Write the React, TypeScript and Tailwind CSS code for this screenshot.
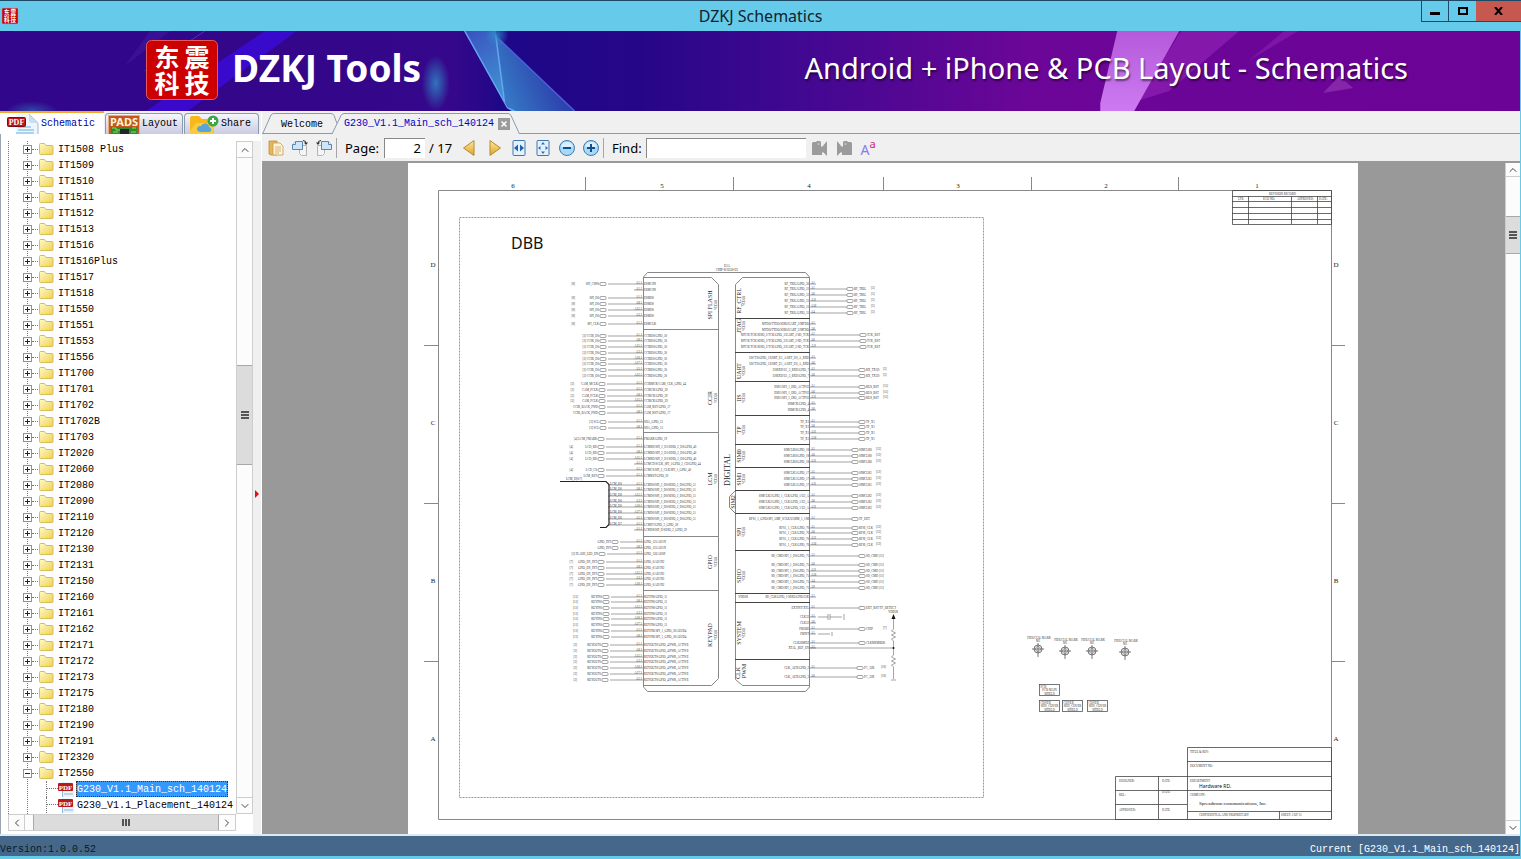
import { useState } from 'react';
import type { ReactNode } from 'react';
import { ChevronDown, ChevronLeft, ChevronRight, ChevronUp } from 'lucide-react';

const folders = [
  'IT1508 Plus', 'IT1509', 'IT1510', 'IT1511', 'IT1512', 'IT1513', 'IT1516', 'IT1516Plus',
  'IT1517', 'IT1518', 'IT1550', 'IT1551', 'IT1553', 'IT1556', 'IT1700', 'IT1701', 'IT1702',
  'IT1702B', 'IT1703', 'IT2020', 'IT2060', 'IT2080', 'IT2090', 'IT2110', 'IT2120', 'IT2130',
  'IT2131', 'IT2150', 'IT2160', 'IT2161', 'IT2162', 'IT2171', 'IT2172', 'IT2173', 'IT2175',
  'IT2180', 'IT2190', 'IT2191', 'IT2320', 'IT2550',
];

const files = ['G230_V1.1_Main_sch_140124', 'G230_V1.1_Placement_140124'];

/* ---------- icons ---------- */

function BrandLogo({ width, height }: { width: number; height: number }) {
  return (
    <svg width={width} height={height} viewBox="0 0 72 60" preserveAspectRatio="none" className="overflow-visible" aria-hidden="true">
      <rect x="0.5" y="0.5" width="71" height="59" rx="5" fill="#cc0000" stroke="#e8585a" />
      <g fill="#fff" fontFamily="Noto Sans CJK SC, sans-serif" fontWeight="700" fontSize="25" textAnchor="middle">
        <text x="21" y="27">东</text>
        <text x="51" y="27">震</text>
        <text x="21" y="53">科</text>
        <text x="51" y="53">技</text>
      </g>
    </svg>
  );
}

function FolderIcon() {
  return (
    <svg width="15" height="14" viewBox="0 0 15 14" aria-hidden="true">
      <defs>
        <linearGradient id="folder" x1="0" y1="0" x2="1" y2="1">
          <stop offset="0" stopColor="#fffbc0" />
          <stop offset="1" stopColor="#efcf5a" />
        </linearGradient>
      </defs>
      <path d="M.5 11.5v-9q0-1 1-1h4l1.5 2h6q1 0 1 1v7q0 1-1 1h-11.500q-1 0-1-1z" fill="url(#folder)" stroke="#d9bd55" />
    </svg>
  );
}

function PdfIcon() {
  return (
    <svg width="16" height="16" viewBox="0 0 16 16" aria-hidden="true">
      <path d="M4 1h8l4 4v11H4z" fill="#e9f2fa" />
      <path d="M4.500 10v6M6 13h9" stroke="#8fb8dc" />
      <rect x="0" y="2" width="15" height="8" rx="1" fill="#b8191b" />
      <text x="7.500" y="8.500" fontSize="7" fontWeight="700" fill="#fff" textAnchor="middle" fontFamily="Liberation Serif, serif">PDF</text>
    </svg>
  );
}

function PdfTabIcon() {
  return (
    <svg width="32" height="20" viewBox="0 0 32 20" aria-hidden="true">
      <path d="M9 0h13l9 8v12H9z" fill="#eef5fb" />
      <path d="M22 0l9 9v11" fill="none" stroke="#9db6cc" />
      <path d="M22 0v7q0 2 2 2h7z" fill="#c9def0" />
      <path d="M11 13h13M11 16h16M9 19h18" stroke="#a9d3ef" strokeWidth="2" />
      <rect x="0.500" y="3.500" width="18" height="9" rx="1" fill="#c01417" stroke="#7e0c0e" />
      <text x="9.500" y="11" fontSize="8" fontWeight="700" fill="#fff" textAnchor="middle" fontFamily="Liberation Serif, serif">PDF</text>
    </svg>
  );
}

function PadsIcon() {
  return (
    <svg width="32" height="19" viewBox="0 0 32 19" aria-hidden="true">
      <rect x="0.500" y="0.500" width="31" height="20" fill="#c4571c" stroke="#e3b07c" />
      <rect x="3" y="12" width="26" height="7" fill="#2f8a2c" />
      <path d="M4 13h4v2h4M24 13h4M5 17h5M23 17h5" stroke="#8be05a" fill="none" />
      <rect x="12" y="14" width="9" height="5" fill="#20262a" />
      <text x="16" y="11" fontSize="11" fontWeight="700" fill="#fff5d8" textAnchor="middle" fontFamily="Noto Sans, sans-serif">PADS</text>
    </svg>
  );
}

function ShareIcon() {
  return (
    <svg width="32" height="19" viewBox="0 0 32 19" aria-hidden="true">
      <path d="M3 3q0-2 2-2h7l3 3h10q2 0 2 2v12H5q-2 0-2-2z" fill="#f7b81c" />
      <path d="M3 16l6-8h19l-2 11H5q-2 0-2-3z" fill="#fbcb3c" />
      <path d="M14 17q-4 0-4-3t4-3q1-3 5-2.500q3 .5 3 3.500q3 1 2 4q-.5 1-2 1z" fill="#58a5dc" />
      <circle cx="26" cy="6" r="5.500" fill="#3fa648" />
      <path d="M26 3v6M23 6h6" stroke="#fff" strokeWidth="2" />
    </svg>
  );
}

function CopyPageIcon() {
  return (
    <svg width="16" height="18" viewBox="0 0 16 18" aria-hidden="true">
      <path d="M1 2h8v14H3l-2-1z" fill="#e7b65a" stroke="#c08a35" strokeWidth=".8" />
      <path d="M5 4h7l3 3v9H5z" fill="#fff3d6" stroke="#c79a50" strokeWidth=".8" />
      <path d="M7 8h6M7 10h6M7 12h6M7 14h4" stroke="#c9a468" strokeWidth=".8" />
    </svg>
  );
}

function RotateIcon({ left = false }: { left?: boolean }) {
  return (
    <svg width="18" height="18" viewBox="0 0 18 18" aria-hidden="true" className={left ? '-scale-x-100' : ''}>
      <path d="M9.500 6.500h6v10h-5l-2-2v-4z" fill="#f4f4f4" stroke="#b5b5b5" />
      <path d="M4.500 2.500h7v8h-10v-5z" fill="#cfe5f8" stroke="#5b86b4" />
      <path d="M1.500 5.500h3v-3" fill="#fff" stroke="#5b86b4" />
      <path d="M12 1.500q3 0 3 3" fill="none" stroke="#333" />
      <path d="M13 3.500h4l-2 2.500z" fill="#333" />
    </svg>
  );
}

function TurnIcon({ next = false }: { next?: boolean }) {
  return (
    <svg width="14" height="18" viewBox="0 0 14 18" aria-hidden="true" className={next ? '-scale-x-100' : ''}>
      <defs>
        <linearGradient id="gold" x1="0" y1="0" x2="0" y2="1">
          <stop offset="0" stopColor="#ffe9a0" />
          <stop offset="1" stopColor="#dba426" />
        </linearGradient>
      </defs>
      <path d="M12 1.500v15L1.500 9z" fill="url(#gold)" stroke="#b58a2c" strokeLinejoin="round" />
    </svg>
  );
}

function FitIcon({ whole = false }: { whole?: boolean }) {
  return (
    <svg width="16" height="18" viewBox="0 0 16 18" aria-hidden="true">
      <rect x="2" y="1.500" width="12" height="15" rx="1" fill="#e4f0fb" stroke="#3f77b0" />
      {whole ? (
        <path d="M8 3l2 2.500H6zM8 15l2-2.500H6zM3 9l2.500-2v4zM13 9l-2.500-2v4z" fill="#2f6fb2" />
      ) : (
        <path d="M3 9l4-3.500v7zM13 9L9 5.500v7z" fill="#1f63ad" />
      )}
    </svg>
  );
}

function ZoomIcon({ plus = false }: { plus?: boolean }) {
  return (
    <svg width="18" height="18" viewBox="0 0 18 18" aria-hidden="true">
      <circle cx="9" cy="9" r="7.500" fill="#a8d8f6" stroke="#3d7db4" />
      <path d="M3 8q1-5 6-5t6 5z" fill="#d8f0ff" />
      <path d={plus ? 'M5 9h8M9 5v8' : 'M5 9h8'} stroke="#0f4f8c" strokeWidth="2" />
    </svg>
  );
}

function FindStepIcon({ next = false }: { next?: boolean }) {
  return (
    <svg width="16" height="16" viewBox="0 0 16 16" aria-hidden="true" className={next ? '-scale-x-100' : ''}>
      <path d="M0 3l1-1h3l1-1h3l1 1v4l1 1 5-6v15l-4-4-1 1v2H0z" fill="#9b9b9b" />
      <circle cx="6.500" cy="4" r="1" fill="#c8c8c8" />
    </svg>
  );
}

/* ---------- schematic sheet ---------- */

interface PinGroup {
  ys: number[];
  gate?: number;
  net?: string;
  pin: string;
  ref?: string;
}

const leftPins: PinGroup[] = [
  { ys: [284], gate: 600, net: 'SPI_CSN0', pin: 'ESMCSN', ref: '[8]' },
  { ys: [290], pin: 'ESMCSN' },
  { ys: [298, 304, 310, 316], gate: 600, net: 'SPI_D0', pin: 'ESMD0', ref: '[8]' },
  { ys: [324], gate: 600, net: 'SPI_CLK', pin: 'ESMCLK', ref: '[8]' },
  { ys: [336, 341, 347, 353, 359, 364, 370, 376], gate: 600, net: '[3] CCIR_D0', pin: 'CCIRD0/GPIO_30' },
  { ys: [384], gate: 599, net: 'CAM_MCLK', pin: 'CCIRMCK/CAM_CLK_GPIO_44', ref: '[3]' },
  { ys: [390, 396, 401], gate: 599, net: 'CAM_PCLK', pin: 'CCIRCK/GPIO_39', ref: '[3]' },
  { ys: [407, 413], gate: 599, net: 'CCIR_BACK_PWD', pin: 'CAM_RST/GPIO_17' },
  { ys: [422, 428], gate: 600, net: '[3] SCL', pin: 'SDA_GPIO_15' },
  { ys: [439], gate: 598, net: '[4] LCM_FMARK', pin: 'FMARK/GPIO_19' },
  { ys: [447, 453, 459], gate: 598, net: 'LCD_RD', pin: 'LCMRD/SPI_2_D1/SDIO_2_D0/GPIO_40', ref: '[4]' },
  { ys: [464], pin: 'LCMCD/SCLK_SPI_1/GPIO_2_CD/GPIO_44' },
  { ys: [470], gate: 598, net: 'LCD_CS', pin: 'LCMCS/SPI_2_CLK/SPI_1_GPIO_40', ref: '[4]' },
  { ys: [476], gate: 598, net: 'LCM_RST', pin: 'LCMRST/GPIO_20' },
  { ys: [485, 490, 496, 502, 507, 513, 519], net: 'LCM_D0', pin: 'LCMD0/SPI_2_D0/SDIO_2_D0/GPIO_51' },
  { ys: [525], net: 'LCM_D7', pin: 'LCMD7/GPIO_2_GPIO_28' },
  { ys: [530], pin: 'LCMD8/SPI_D/SDIO_2_GPIO_59' },
  { ys: [542, 548], gate: 612, net: 'GPIO_INT', pin: 'GPIO_125/AD1N' },
  { ys: [554], gate: 599, net: '[3] FLASH_LED_EN', pin: 'GPIO_126/AD0P' },
  { ys: [562, 568, 574, 579, 585], gate: 598, net: 'GPIO_EN_INT', pin: 'GPIO_0/AD1N2', ref: '[7]' },
  { ys: [597, 602, 608, 614, 619, 625], gate: 603, net: 'KEYIN0', pin: 'KEYIN0/GPIO_11', ref: '[11]' },
  { ys: [631, 637], gate: 603, net: 'KEYIN6', pin: 'KEYIN6/SPI_1_GPIO_30/AD2D4', ref: '[11]' },
  { ys: [645, 651, 657, 662, 668, 674, 680], gate: 602, net: 'KEYOUT0', pin: 'KEYOUT0/GPIO_4/PWR_ACTIVE', ref: '[2]' },
];

const rightPins: PinGroup[] = [
  { ys: [284], pin: 'RF_TRIG/GPIO_30' },
  { ys: [289, 295, 301, 307, 313], gate: 847, net: 'RF_TRIG', pin: 'RF_TRIG/GPIO_31', ref: '[5]' },
  { ys: [324, 330], pin: 'MTDO/TTDO/SDIO/UART_2/MTDO' },
  { ys: [335, 341, 347], gate: 860, net: 'TCK_RST', pin: 'MTCK/TCK/SDIO_2/TCK/GPIO_2/UART_2/SD_TCK' },
  { ys: [358, 364], pin: 'U0CTS/GPIO_1/U0RT_U1_A/SET_U0_A_RXD' },
  { ys: [370, 376], gate: 859, net: 'RX_TX1D', pin: 'U0RXD/U1_3_RXD/GPIO_7', ref: '[3]' },
  { ys: [387, 393, 398], gate: 859, net: 'BUS_RST', pin: 'IISD1/SPI_1_DIO_ACTIVE', ref: '[15]' },
  { ys: [404, 410], pin: 'IISMCK/GPIO_4' },
  { ys: [422, 427, 433, 439], gate: 859, net: 'TP_X1', pin: 'TP_X1' },
  { ys: [450, 456, 462], gate: 852, net: 'SIMCLK0', pin: 'SIMCLK0/GPIO_18', ref: '[12]' },
  { ys: [473, 479, 485], gate: 852, net: 'SIMCLK1', pin: 'SIMCLK1/GPIO_17', ref: '[12]' },
  { ys: [496, 502, 508], gate: 852, net: 'SIMCLK2', pin: 'SIMCLK2/GPIO_1_CLK/GPIO_1/U2_A', ref: '[12]' },
  { ys: [519], gate: 852, net: 'TF_DET', pin: 'RFS1_1_GPIO/SPI_AMP_SCLK/U3SIM_1_1/M' },
  { ys: [528, 533, 539, 545], gate: 852, net: 'RFSI_CLK', pin: 'RFS1_1_CLK/GPIO_70', ref: '[12]' },
  { ys: [556, 565, 571, 576, 582, 588], gate: 859, net: 'SD_CMD [11]', pin: 'SD_CMD/SPI_1_D0/GPIO_75' },
  { ys: [597], pin: 'SD_CLK/GPIO_1/SDIO/GPIO/32K' },
  { ys: [608], gate: 859, net: 'EXT_RST/TF_DETECT', pin: 'EXTINT/XTL' },
  { ys: [617, 623], pin: 'CLK32' },
  { ys: [629], gate: 859, net: 'CHIP', pin: 'PROBE', ref: '[7]' },
  { ys: [634], pin: 'PBINT' },
  { ys: [643], gate: 859, net: 'CLKMEMBER', pin: 'CLK26MHZ' },
  { ys: [648], pin: 'XTAL_BUF_EN' },
  { ys: [668, 677], gate: 857, net: 'FC_32K', pin: 'CLK_AUX/GPIO_2', ref: '[10]' },
];

const leftBlocks = [
  { label: 'SPI FLASH', y: 305 },
  { label: 'CCIR', y: 398 },
  { label: 'LCM', y: 479 },
  { label: 'GPIO', y: 562 },
  { label: 'KEYPAD', y: 635 },
];

const rightBlocks = [
  { label: 'RF_CTRL', y: 301 },
  { label: 'JTAG', y: 326 },
  { label: 'UART', y: 371 },
  { label: 'IIS', y: 398 },
  { label: 'TP', y: 430 },
  { label: 'SIM0', y: 456 },
  { label: 'SIM1', y: 479 },
  { label: 'SPI', y: 532 },
  { label: 'SDIO', y: 576 },
  { label: 'SYSTEM', y: 633 },
];

function LeftPins() {
  return (
    <g>
      {leftPins.map((group) =>
        group.ys.map((y, i) => (
          <g key={y}>
            <path d={`M${group.gate ? group.gate + 8 : group.net ? 608 : 634} ${y}H643`} />
            {group.gate && <rect x={group.gate} y={y - 1.5} width="6" height="3" rx="1" />}
            <g stroke="none" fill="#333" fontSize="3">
              <text x="642" y={y - 0.5} textAnchor="end">{`A${(i * 7) % 19 + 1}.1`}</text>
              <text x="644" y={y + 1}>{group.pin}</text>
              {group.gate && <text x={group.gate - 1} y={y + 1} textAnchor="end">{group.net}</text>}
              {!group.gate && group.net && <text x="610" y={y}>{group.net}</text>}
              {group.ref && <text x={group.gate! - 25} y={y + 1} textAnchor="end">{group.ref}</text>}
            </g>
          </g>
        )),
      )}
    </g>
  );
}

function RightPins() {
  return (
    <g>
      {rightPins.map((group) =>
        group.ys.map((y, i) => (
          <g key={y}>
            <path d={`M810 ${y}H${group.gate ? group.gate : 816}`} />
            {group.gate && <rect x={group.gate} y={y - 1.5} width="6" height="3" rx="1" />}
            <g stroke="none" fill="#333" fontSize="3">
              <text x="811" y={y - 0.5}>{`A${(i * 5) % 17 + 1}`}</text>
              <text x="809" y={y + 1} textAnchor="end">{group.pin}</text>
              {group.gate && <text x={group.gate + 7} y={y + 1}>{group.net}</text>}
              {group.ref && <text x={group.gate! + 24} y={y}>{group.ref}</text>}
            </g>
          </g>
        )),
      )}
    </g>
  );
}

function Fiducial({ x, y }: { x: number; y: number }) {
  return (
    <g>
      <circle cx={x} cy={y} r="4" />
      <circle cx={x} cy={y} r="2.500" strokeWidth=".5" />
      <path d={`M${x - 6} ${y}h12M${x} ${y - 6}v14`} />
      <g stroke="none" fill="#333" fontSize="3">
        <text x={x + 1} y={y - 10} textAnchor="middle">FIDUCIAL MARK</text>
        <text x={x - 2} y={y - 7}>M1</text>
      </g>
    </g>
  );
}

function PartBox({ x, y, name, value }: { x: number; y: number; name: string; value: string }) {
  return (
    <g>
      <rect x={x} y={y} width="20" height="11" />
      <g stroke="none" fill="#333" fontSize="3">
        <text x={x + 1} y={y + 3}>{name}</text>
        <text x={x + 10} y={y + 6.5} textAnchor="middle">{value}</text>
        <text x={x + 10} y={y + 10} textAnchor="middle">SHIELD</text>
      </g>
    </g>
  );
}

function SchematicSheet() {
  return (
    <svg width="950" height="671" viewBox="408 163 950 671" className="shrink-0 bg-white" fontFamily="Liberation Serif, serif" role="img" aria-label="Schematic page 2">
      {/* sheet frame, zone ticks and zone letters */}
      <g fill="none" stroke="#888">
        <path d="M438.500 190.500H1331.500V819.500H438.500z" />
        <path d="M585.500 177v13M733.500 177v13M883.500 177v13M1031.500 177v13M1178.500 177v13" />
        <path d="M424 345.500h14M424 503.500h14M424 661.500h14M1331 345.500h14M1331 503.500h14M1331 661.500h14" />
        <rect x="459.500" y="217.500" width="524" height="580" stroke="#999" strokeDasharray="2 1" />
      </g>
      <g fill="#222" fontSize="7" textAnchor="middle">
        {[513, 662, 809, 958, 1106, 1257].map((x, i) => (
          <text key={x} x={x} y="188">{6 - i}</text>
        ))}
        {['D', 'C', 'B', 'A'].map((zone, i) => (
          <g key={zone}>
            <text x="433" y={267 + i * 158}>{zone}</text>
            <text x="1336" y={267 + i * 158}>{zone}</text>
          </g>
        ))}
      </g>
      <text x="511" y="249" fontSize="16" fill="#111" fontFamily="Noto Sans, sans-serif">DBB</text>

      {/* chip body */}
      <g fill="none" stroke="#888">
        <path d="M643.500 277l4-4.500h158l4 4.500v410l-4 4.500h-158l-4-4.500z" />
        <path d="M643.500 277.500h68l7 7v394l-7 7h-68" />
        <path d="M643 329.500h75M643 432.500h75M643 536.500h75M643 590.500h75" />
        <path d="M809.500 277.500h-67l-7 7v206l-6 6v11l6 6v166l7 6h67" />
        <path d="M735.500 490v24" />
        <path stroke="#444" d="M735 318.500h75M735 352.500h75M735 381.500h75M735 415.500h75M735 444.500h75M735 467.500h75M735 490.500h75M735 513.500h75M735 550.500h75M735 593.500h75M735 602.500h75M735 659.500h75" />
      </g>
      <g fill="none" stroke="#666" strokeWidth=".6">
        <LeftPins />
        <RightPins />
        <path d="M810 648h84M818 617h10M828 614v6M830 614v6M830 617h12M844 614v6M818 634h12M832 632v4" />
        <path d="M893.500 615v14l-2 2 4 2-4 2 4 2-4 2 2 2v14l-2 2 4 2-4 2 4 2-4 2 2 2v12M891 680h5" />
      </g>
      <path d="M893.500 614l-2 5h4z" fill="#111" />
      <circle cx="893.500" cy="648" r="1" fill="#111" />
      <path d="M560 481.500h46l3 3v40l-3 3h-6" fill="none" stroke="#222" strokeWidth="1.200" />

      <g fill="#222" textAnchor="middle">
        <text x="727" y="267" fontSize="3">U1A</text>
        <text x="727" y="271" fontSize="3">CHIP-SC6530-U1</text>
        <text x="574" y="480" fontSize="3">LCM_D[0:7]</text>
        <text x="893" y="613" fontSize="3">VDD28</text>
        <text transform="translate(730 470) rotate(-90)" fontSize="8">DIGITAL</text>
        {leftBlocks.map((block) => (
          <g key={block.label}>
            <text transform={`translate(712 ${block.y}) rotate(-90)`} fontSize="6">{block.label}</text>
            <text transform={`translate(717 ${block.y}) rotate(-90)`} fontSize="3">VDD28</text>
          </g>
        ))}
        {rightBlocks.map((block) => (
          <g key={block.label}>
            <text transform={`translate(741 ${block.y}) rotate(-90)`} fontSize="6">{block.label}</text>
            <text transform={`translate(745 ${block.y}) rotate(-90)`} fontSize="3">VDD28</text>
          </g>
        ))}
        <text transform="translate(735 502) rotate(-90)" fontSize="6">SIM2</text>
        <text transform="translate(740 673) rotate(-90)" fontSize="6">CLK</text>
        <text transform="translate(746 671) rotate(-90)" fontSize="6">PWM</text>
        <text x="743" y="598" fontSize="3">VDD28</text>
      </g>

      {/* mechanical parts */}
      <g fill="none" stroke="#555" strokeWidth=".8">
        <Fiducial x={1038} y={649} />
        <Fiducial x={1065} y={651} />
        <Fiducial x={1092} y={651} />
        <Fiducial x={1125} y={652} />
        <PartBox x={1039.5} y={684.5} name="PCB" value="PCB MAIN" />
        <PartBox x={1039.5} y={700.5} name="COVER" value="SHD_COVER" />
        <PartBox x={1062.5} y={700.5} name="COVER" value="SHD_COVER" />
        <PartBox x={1087.5} y={700.5} name="COVER" value="SHD_COVER" />
      </g>

      {/* revision table and title block */}
      <g fill="none" stroke="#444">
        <path d="M1232.500 190.500h99v34h-99zM1232 196.500h99M1232 201.500h99M1232 207.500h99M1232 213.500h99M1232 219.500h99" strokeWidth=".8" />
        <path d="M1248.500 196v28M1291.500 196v28M1317.500 196v28" strokeWidth=".8" />
        <path d="M1187.500 819v-71.500h144v72M1187 761.500h144M1115.500 819v-42.500h216M1115 790.500h216M1115 804.500h72M1187 811.500h144M1158.500 776v43M1279.500 811v8M1115 819.500h216" strokeWidth=".8" />
      </g>
      <g fill="#333" fontSize="3">
        <text x="1269" y="195">REVISION RECORD</text>
        <text x="1238" y="200">LTR</text>
        <text x="1263" y="200">ECO NO:</text>
        <text x="1297" y="200">APPROVED:</text>
        <text x="1319" y="200">DATE:</text>
        <text x="1190" y="753">TITLE & REV:</text>
        <text x="1190" y="767">DOCUMENT NO:</text>
        <text x="1190" y="782">DEPARTMENT:</text>
        <text x="1190" y="796">COMPANY:</text>
        <text x="1119" y="782">DESIGNER:</text>
        <text x="1119" y="796">REL:</text>
        <text x="1119" y="811">APPROVED:</text>
        <text x="1162" y="782">DATE:</text>
        <text x="1162" y="793">DATE:</text>
        <text x="1162" y="811">DATE:</text>
        <text x="1199" y="816">CONFIDENTIAL AND PROPRIETARY</text>
        <text x="1281" y="816">SHEET: 2 OF 13</text>
      </g>
      <text x="1199" y="788" fontSize="5" fill="#111" fontFamily="Noto Sans, sans-serif">Hardware RD.</text>
      <text x="1199" y="805" fontSize="5" fill="#111">Spreadtrum communications, Inc.</text>
    </svg>
  );
}

/* ---------- window pieces ---------- */

function TitleBar() {
  return (
    <header className="grid h-[31px] shrink-0 grid-cols-[1fr_auto_1fr] items-center border-t border-[#1c4a66] bg-[#66cbea]">
      <div className="pl-0.5">
        <BrandLogo width={16} height={16} />
      </div>
      <h1 className="text-[16px] leading-5 text-[#10222c]">DZKJ Schematics</h1>
      <div className="flex h-[21px] self-start justify-self-end border-b border-l border-[#1c4a66]">
        <button type="button" aria-label="Minimize" className="flex w-[27px] items-end justify-center border-r border-[#1c4a66] pb-1.5">
          <span className="h-[3px] w-2.5 bg-black" />
        </button>
        <button type="button" aria-label="Maximize" className="flex w-[27px] items-center justify-center">
          <span className="h-2 w-2.5 border-2 border-black" />
        </button>
        <button type="button" aria-label="Close" className="flex w-[45px] items-center justify-center bg-[#c75850]">
          <svg width="9" height="8" viewBox="0 0 9 8" aria-hidden="true">
            <path d="M1 0l7 8M8 0L1 8" stroke="#000" strokeWidth="2" />
          </svg>
        </button>
      </div>
    </header>
  );
}

function Banner() {
  return (
    <div className="relative flex h-20 shrink-0 items-center overflow-hidden bg-[#32068a] pr-28 pb-0.5 pl-[146px]">
      <svg className="absolute inset-0 h-full w-full" viewBox="0 0 1521 80" preserveAspectRatio="none" aria-hidden="true">
        <defs>
          <linearGradient id="sky" x1="0" x2="1">
            <stop offset="0" stopColor="#31068a" />
            <stop offset=".3" stopColor="#35078a" />
            <stop offset=".33" stopColor="#1d0888" />
            <stop offset=".42" stopColor="#260688" />
            <stop offset=".52" stopColor="#3f0890" />
            <stop offset=".68" stopColor="#6c0698" />
            <stop offset="1" stopColor="#6b0496" />
          </linearGradient>
          <linearGradient id="shard" x1="0" y1="0" x2=".4" y2="1">
            <stop offset="0" stopColor="#3a50c0" />
            <stop offset="1" stopColor="#3f8fd0" />
          </linearGradient>
          <linearGradient id="shardDark" x1="0" y1="1" x2="1" y2=".6">
            <stop offset="0" stopColor="#3886cc" />
            <stop offset="1" stopColor="#2a30a4" />
          </linearGradient>
          <linearGradient id="pink" x1="0" y1="0" x2="0" y2="1">
            <stop offset="0" stopColor="#b559da" />
            <stop offset="1" stopColor="#cc7bf2" />
          </linearGradient>
          <radialGradient id="glow">
            <stop offset="0" stopColor="#2f8fc8" stopOpacity=".8" />
            <stop offset="1" stopColor="#2f8fc8" stopOpacity="0" />
          </radialGradient>
        </defs>
        <rect width="1521" height="80" fill="url(#sky)" />
        <path d="M265 0h32L188 80h-42z" fill="#3b0bdc" opacity=".8" />
        <path d="M150 0h20l-45 35z" fill="#4b2cae" opacity=".3" />
        <path d="M205 0l-60 40" stroke="#6a3cc0" opacity=".7" />
        <ellipse cx="436" cy="52" rx="14" ry="28" fill="url(#glow)" />
        <ellipse cx="32" cy="80" rx="26" ry="10" fill="url(#glow)" opacity=".6" />
        <path d="M465 0h31l9 72z" fill="url(#shard)" />
        <path d="M496 4l79 76h-64l-6-10z" fill="url(#shardDark)" />
        <path d="M465 0l43 77 7 3M496 4l9 68" stroke="#68a6f2" strokeWidth="1.500" fill="none" />
        <path d="M498 7l77 73" stroke="#4b5fd8" strokeWidth="1.500" />
        <circle cx="497" cy="4" r="12" fill="url(#glow)" />
        <path d="M1182 0h58l-70 60-32 10z" fill="#9b2cc0" opacity=".5" />
        <path d="M1285 0h14l-50 30z" fill="#9b2cc0" opacity=".4" />
        <path d="M1118 0h62l-45 80h-34v-8z" fill="url(#pink)" />
        <path d="M1340 45l14 12-30 5z" fill="#9a3cb8" opacity=".6" />
      </svg>
      <div className="relative flex w-full items-center">
        <BrandLogo width={72} height={60} />
        <p className="ml-3.5 pb-1 text-[37px] leading-10 font-bold text-white">DZKJ Tools</p>
        <p className="ml-auto pb-1 text-[29px] leading-10 text-white [text-shadow:1px_2px_2px_#0008]">
          Android + iPhone &amp; PCB Layout - Schematics
        </p>
      </div>
    </div>
  );
}

function SideTab({ icon, label, active = false, width }: { icon: ReactNode; label: string; active?: boolean; width: string }) {
  return (
    <button
      type="button"
      role="tab"
      aria-selected={active}
      className={`flex items-end ${width} ${
        active
          ? 'h-[23px] border-t-2 border-[#f5a72a] bg-white pl-[7px] text-[#0000a8]'
          : 'h-[21px] rounded-t-sm border border-b-0 border-[#8b9bad] bg-linear-to-b from-[#f6f6fb] to-[#c9cbe2] pl-0.5 text-black'
      }`}
    >
      {icon}
      <span className="pb-0.5 pl-0.5 leading-4">{label}</span>
    </button>
  );
}

function SidePanel() {
  const [selected, setSelected] = useState(files[0]);

  return (
    <aside className="flex w-[262px] shrink-0 flex-col border-r border-white bg-[#f0f0f0]">
      <div role="tablist" className="flex h-[23px] shrink-0 items-end gap-px text-[10px]">
        <SideTab active icon={<PdfTabIcon />} label="Schematic" width="w-[104px]" />
        <SideTab icon={<PadsIcon />} label="Layout" width="w-[78px]" />
        <SideTab icon={<ShareIcon />} label="Share" width="w-[75px]" />
      </div>
      <div className="flex min-h-0 flex-1 border-l border-[#9aa7b3] bg-white pt-[7px]">
        <div className="flex min-w-0 flex-1 flex-col pb-[3px] pl-[7px]">
          <div className="flex min-h-0 flex-1">
            <ul className="relative min-w-0 flex-1 overflow-hidden border-l border-dotted border-[#777] text-[10px] leading-4 whitespace-nowrap text-black">
              <li aria-hidden="true" className="absolute top-0 bottom-0 left-[18px] border-l border-dotted border-[#777]" />
              {folders.map((name) => (
                <li key={name} className="relative flex h-4 items-center pl-3.5">
                  <button type="button" aria-label={`Toggle ${name}`} className="flex size-[9px] shrink-0 items-center justify-center border border-[#919191] bg-white">
                    <svg width="7" height="7" viewBox="0 0 7 7" aria-hidden="true">
                      <path d={name === 'IT2550' ? 'M1 3.5h5' : 'M1 3.5h5M3.5 1v5'} stroke="#222" />
                    </svg>
                  </button>
                  <span className="mr-px w-[6px] border-t border-dotted border-[#777]" />
                  <FolderIcon />
                  <span className="pt-0.5 pl-1">{name}</span>
                </li>
              ))}
              {files.map((name) => (
                <li key={name} className="flex h-4 items-center pl-[37px]">
                  <span className="h-4 w-3 border-l border-dotted border-[#777]">
                    <span className="block h-2 border-b border-dotted border-[#777]" />
                  </span>
                  <PdfIcon />
                  <button
                    type="button"
                    onClick={() => setSelected(name)}
                    className={`ml-0.5 h-4 pt-px pr-px pl-px ${selected === name ? 'bg-[#3399ff] text-white outline-1 -outline-offset-1 outline-dotted outline-[#333]' : ''}`}
                  >
                    {name}
                  </button>
                </li>
              ))}
              <li className="flex h-4 items-center pl-[30px]">
                <FolderIcon />
              </li>
            </ul>
            <div className="flex w-[17px] flex-col border border-[#cdcdcd] bg-[#fcfcfc]">
              <button type="button" aria-label="Scroll up" className="flex h-4 items-center justify-center border-b border-[#cdcdcd]">
                <ChevronUp size={12} color="#444" />
              </button>
              <div className="flex-[4]" />
              <div className="flex h-[100px] flex-col items-center justify-center gap-px border-y border-[#a8a8a8] bg-[#dcdcdc]">
                <span className="h-0.5 w-2 bg-[#555]" />
                <span className="h-0.5 w-2 bg-[#555]" />
                <span className="h-0.5 w-2 bg-[#555]" />
              </div>
              <div className="flex-[6.4]" />
              <button type="button" aria-label="Scroll down" className="flex h-4 items-center justify-center border-t border-[#cdcdcd]">
                <ChevronDown size={12} color="#444" />
              </button>
            </div>
          </div>
          <div className="mr-[17px] flex h-[17px] shrink-0 border border-[#cdcdcd] bg-[#fcfcfc]">
            <button type="button" aria-label="Scroll left" className="flex w-4 items-center justify-center border-r border-[#cdcdcd]">
              <ChevronLeft size={12} color="#444" />
            </button>
            <div className="ml-2 flex flex-1 items-center justify-center gap-px border-x border-[#a8a8a8] bg-[#dcdcdc]">
              <span className="h-[7px] w-0.5 bg-[#555]" />
              <span className="h-[7px] w-0.5 bg-[#555]" />
              <span className="h-[7px] w-0.5 bg-[#555]" />
            </div>
            <button type="button" aria-label="Scroll right" className="flex w-4 items-center justify-center">
              <ChevronRight size={12} color="#444" />
            </button>
          </div>
        </div>
        <div className="flex w-2 items-center justify-center bg-[#f0f0f0] pt-3">
          <svg width="4" height="8" viewBox="0 0 4 8" aria-hidden="true">
            <path d="M0 0l4 4-4 4z" fill="#e01010" />
          </svg>
        </div>
      </div>
    </aside>
  );
}

function DocumentTabs() {
  return (
    <div role="tablist" className="flex h-[23px] shrink-0 items-end border-b border-[#8b9bad] font-['Liberation_Mono',monospace] text-[10px]">
      <button type="button" role="tab" aria-selected="false" className="relative h-5 w-[76px] text-black">
        <svg className="absolute inset-0 h-full w-full" viewBox="0 0 76 20" preserveAspectRatio="none" fill="none" aria-hidden="true">
          <path d="M1 20L9 2q1-1.500 3-1.500h57q2 0 3 2l3 8" stroke="#8b9bad" />
        </svg>
        <span className="relative block pt-1 pl-1 leading-4">Welcome</span>
      </button>
      <div className="relative -mb-px flex h-[21px] w-[182px] items-center pt-px pl-1.5">
        <svg className="absolute inset-0 h-full w-full overflow-visible" viewBox="0 0 182 21" preserveAspectRatio="none" aria-hidden="true">
          <path d="M-6 21L3 2.500Q4 .5 6 .5h164q2 0 3 2l8.500 18.500" fill="#f0f0f0" stroke="#8b9bad" />
        </svg>
        <button type="button" role="tab" aria-selected="true" className="relative leading-5 text-[#0000c8]">
          G230_V1.1_Main_sch_140124
        </button>
        <button type="button" aria-label="Close tab" className="relative ml-1 flex size-3 items-center justify-center bg-[#9b9b9b]">
          <svg width="6" height="6" viewBox="0 0 6 6" aria-hidden="true">
            <path d="M.5.5l5 5M5.500.5l-5 5" stroke="#fff" strokeWidth="1.500" />
          </svg>
        </button>
      </div>
    </div>
  );
}

function ToolButton({ label, children }: { label: string; children: ReactNode }) {
  return (
    <button type="button" aria-label={label} title={label} className="flex size-6 shrink-0 items-center justify-center">
      {children}
    </button>
  );
}

function Toolbar() {
  return (
    <div className="flex h-[29px] shrink-0 items-center border-b-2 border-[#999] pl-0.5 text-[13px] text-black">
      <ToolButton label="Copy page"><CopyPageIcon /></ToolButton>
      <ToolButton label="Rotate right"><RotateIcon /></ToolButton>
      <ToolButton label="Rotate left"><RotateIcon left /></ToolButton>
      <span className="h-5 w-px bg-[#a5a5a5]" />
      <label htmlFor="page" className="w-[47px] pt-0.5 pl-2">Page:</label>
      <input id="page" defaultValue="2" className="h-5 w-[41px] border-t border-l border-[#888] bg-white pr-1 text-right outline-none" />
      <span className="w-8 pt-0.5 pl-1 whitespace-nowrap">/ 17</span>
      <ToolButton label="Previous page"><TurnIcon /></ToolButton>
      <span className="w-0.5" />
      <ToolButton label="Next page"><TurnIcon next /></ToolButton>
      <ToolButton label="Fit width"><FitIcon /></ToolButton>
      <ToolButton label="Fit page"><FitIcon whole /></ToolButton>
      <ToolButton label="Zoom out"><ZoomIcon /></ToolButton>
      <ToolButton label="Zoom in"><ZoomIcon plus /></ToolButton>
      <span className="h-5 w-px bg-[#a5a5a5]" />
      <label htmlFor="find" className="w-[42px] pt-0.5 pl-2">Find:</label>
      <input id="find" className="h-5 w-40 border-t border-l border-[#888] bg-white px-1 outline-none" />
      <span className="w-0.5" />
      <ToolButton label="Find previous"><FindStepIcon /></ToolButton>
      <ToolButton label="Find next"><FindStepIcon next /></ToolButton>
      <button type="button" aria-label="Match case" className="flex h-5 w-6 items-start justify-center leading-4">
        <span className="pt-1 text-[14px] text-[#8a7cf0]">A</span>
        <span className="text-[11px] leading-3 text-[#d0208c]">a</span>
      </button>
    </div>
  );
}

function Viewer() {
  return (
    <main className="flex min-w-0 flex-1 flex-col bg-[#f0f0f0]">
      <DocumentTabs />
      <Toolbar />
      <div className="flex min-h-0 flex-1 bg-[#999]">
        <div className="flex min-w-0 flex-1 items-start justify-center overflow-hidden pr-px">
          <SchematicSheet />
        </div>
        <div className="flex w-[15px] flex-col border-l border-[#cdcdcd] bg-[#fcfcfc]">
          <button type="button" aria-label="Page up" className="flex h-3.5 items-center justify-center border-b border-[#cdcdcd]">
            <ChevronUp size={12} color="#444" />
          </button>
          <div className="flex-[3]" />
          <div className="flex h-[38px] flex-col items-center justify-center gap-px border-y border-[#a8a8a8] bg-[#dcdcdc]">
            <span className="h-0.5 w-2 bg-[#555]" />
            <span className="h-0.5 w-2 bg-[#555]" />
            <span className="h-0.5 w-2 bg-[#555]" />
          </div>
          <div className="flex-[43]" />
          <button type="button" aria-label="Page down" className="flex h-3.5 items-center justify-center border-t border-[#cdcdcd]">
            <ChevronDown size={12} color="#444" />
          </button>
        </div>
      </div>
    </main>
  );
}

export default function App() {
  return (
    <div className="flex h-screen flex-col overflow-hidden bg-[#f0f0f0] font-['Noto_Sans',sans-serif]">
      <TitleBar />
      <div className="flex min-h-0 flex-1 flex-col border-r border-b-3 border-[#66cbea]">
        <Banner />
        <div className="flex min-h-0 flex-1">
          <div className="flex shrink-0 font-['Liberation_Mono',monospace]">
            <SidePanel />
          </div>
          <Viewer />
        </div>
        <footer className="flex h-[22px] shrink-0 items-end justify-between border-t-2 border-[#dfe9ee] bg-[#44678a] font-['Liberation_Mono',monospace] text-[10px] leading-3">
          <span className="text-[#0c1a26]">Version:1.0.0.52</span>
          <span className="text-white">Current [G230_V1.1_Main_sch_140124]</span>
        </footer>
      </div>
    </div>
  );
}
